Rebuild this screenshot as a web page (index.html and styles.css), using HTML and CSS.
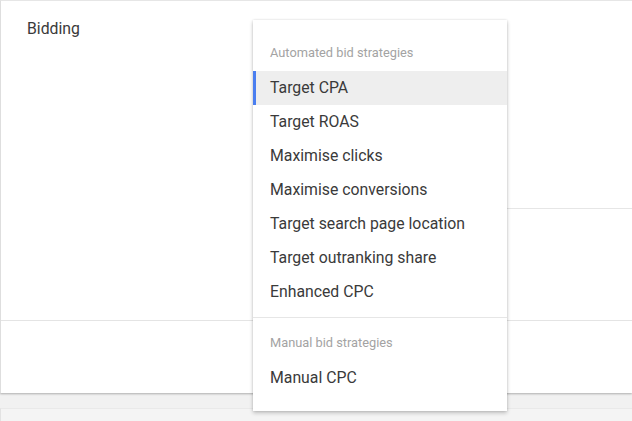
FILE: index.html
```html
<!DOCTYPE html>
<html>
<head>
<meta charset="utf-8">
<link rel="stylesheet" href="styles.css">
</head>
<body>
<div class="page">
  <section class="card">
    <div class="row row-top">
      <div class="label">Bidding</div>
      <div class="content">
        <div class="content-upper"></div>
        <div class="content-lower"></div>
      </div>
    </div>
    <div class="row row-bottom"></div>
  </section>
  <section class="card-next"></section>

  <div class="menu">
    <div class="menu-header first">Automated bid strategies</div>
    <div class="menu-item selected">Target CPA</div>
    <div class="menu-item">Target ROAS</div>
    <div class="menu-item">Maximise clicks</div>
    <div class="menu-item">Maximise conversions</div>
    <div class="menu-item">Target search page location</div>
    <div class="menu-item">Target outranking share</div>
    <div class="menu-item">Enhanced CPC</div>
    <div class="menu-divider"></div>
    <div class="menu-header">Manual bid strategies</div>
    <div class="menu-item">Manual CPC</div>
  </div>
</div>
</body>
</html>
```

FILE: styles.css
```css
html, body {
  margin: 0;
  padding: 0;
}
body {
  background: #f1f1f1;
  font-family: Roboto, "Liberation Sans", Arial, sans-serif;
  color: #3a3a3a;
  width: 632px;
  height: 421px;
  overflow: hidden;
}
.page {
  position: relative;
  height: 421px;
}
.card {
  background: #ffffff;
  border-top: 1px solid #e6e6e6;
  border-left: 1px solid #dedede;
  box-shadow: 0 1px 2px rgba(0, 0, 0, 0.28);
  height: 393px;
  box-sizing: border-box;
  display: flex;
  flex-direction: column;
}
.row-top {
  display: flex;
  height: 320px;
  border-bottom: 1px solid #e4e4e4;
  box-sizing: border-box;
}
.label {
  width: 230px;
  padding: 18px 0 0 26px;
  font-size: 15.8px;
  line-height: 20px;
  color: #3a3a3a;
}
.content {
  flex: 1;
  display: flex;
  flex-direction: column;
}
.content-upper {
  height: 207px;
  border-bottom: 1px solid #e6e6e6;
}
.row-bottom {
  flex: 1;
}
.card-next {
  margin-top: 15px;
  height: 13px;
  border-top: 1px solid #e9e9e9;
  border-left: 1px solid #e2e2e2;
  background: #f4f4f4;
}
.menu {
  position: absolute;
  left: 253px;
  top: 20px;
  width: 254px;
  background: #ffffff;
  box-shadow: 0 2px 4px rgba(0, 0, 0, 0.22), 0 0 2px rgba(0, 0, 0, 0.12);
  padding-bottom: 16px;
}
.menu-header {
  padding: 14px 17px 7px;
  font-size: 12.8px;
  line-height: 22px;
  color: #a3a3a3;
}
.menu-header.first {
  padding-top: 22px;
}
.menu-item {
  height: 34px;
  line-height: 34px;
  padding-left: 17px;
  font-size: 15.8px;
  color: #3a3a3a;
  box-sizing: border-box;
}
.menu-item.selected {
  background: #eeeeee;
  border-left: 3px solid #4a7ef0;
  padding-left: 14px;
}
.menu-divider {
  height: 1px;
  background: #e6e6e6;
  margin-top: 8px;
}
```
